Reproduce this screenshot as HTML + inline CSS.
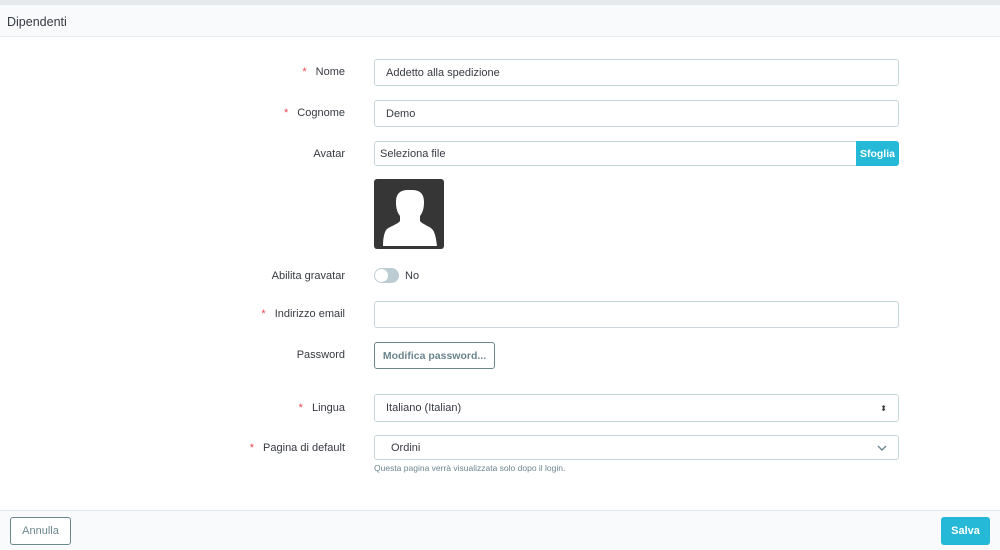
<!DOCTYPE html>
<html><head><meta charset="utf-8"><style>
*{box-sizing:border-box;margin:0;padding:0}
body{width:1000px;height:550px;overflow:hidden;background:#fff;font-family:"Liberation Sans",sans-serif;font-size:11px;color:#363a41;position:relative}
.top{position:absolute;left:0;top:0;width:1000px;height:5px;background:#e6e9ec}
.hdr{position:absolute;left:0;top:5px;width:1000px;height:32px;background:#f8fafb;border-bottom:1px solid #e6ecef;padding:10px 7px;font-size:12.5px;color:#363a41}
.lbl{position:absolute;right:655px;text-align:right;font-size:11px;color:#363a41}
.lbl b{color:#e9484f;font-weight:normal;margin-right:9px}
.inp{position:absolute;left:374px;width:525px;border:1px solid #c7d6da;border-radius:3px;background:#fff;padding:0 11px;display:flex;align-items:center;font-size:11px}
.foot{position:absolute;left:0;top:510px;width:1000px;height:40px;background:#f8fafb;border-top:1px solid #e3eaed}
.btn{position:absolute;border-radius:3px;display:flex;align-items:center;justify-content:center;font-size:11px}
</style></head><body>
<div class="top"></div>
<div class="hdr">Dipendenti</div>

<div class="lbl" style="top:66px"><b>*</b>Nome</div>
<div class="inp" style="top:59px;height:27px">Addetto alla spedizione</div>
<div class="lbl" style="top:107px"><b>*</b>Cognome</div>
<div class="inp" style="top:100px;height:27px">Demo</div>
<div class="lbl" style="top:148px">Avatar</div>
<div class="inp" style="top:141px;height:25px;padding-left:5px">Seleziona file</div>
<div class="btn" style="left:856px;top:141px;width:43px;height:25px;background:#25b9d7;color:#fff;font-weight:bold;border-radius:0 3px 3px 0;font-size:10.5px">Sfoglia</div>
<div style="position:absolute;left:374px;top:179px;width:70px;height:70px;background:#363636;border-radius:3px;overflow:hidden">
<svg width="70" height="70" viewBox="0 0 70 70"><path d="M34 11c-7 0-12 3-12 12 0 6 1 10 4 14v5c-2 3-9 5-13 8-3 3-4 10-4 17h54c-1-8-2-14-5-17-3-3-10-5-12-8v-5c3-4 4-8 4-14 0-9-5-12-12-12z" fill="#fff"/></svg></div>
<div class="lbl" style="top:270px">Abilita gravatar</div>
<div style="position:absolute;left:374px;top:268px;width:25px;height:15px;border-radius:8px;background:#bbcdd2"><div style="position:absolute;left:1px;top:1px;width:13px;height:13px;border-radius:50%;background:#fff"></div></div>
<div style="position:absolute;left:405px;top:270px">No</div>
<div class="lbl" style="top:308px"><b>*</b>Indirizzo email</div>
<div class="inp" style="top:301px;height:27px"></div>
<div class="lbl" style="top:349px">Password</div>
<div class="btn" style="left:374px;top:342px;width:121px;height:27px;border:1px solid #6c868e;color:#6c868e;font-weight:bold;font-size:10.5px">Modifica password...</div>
<div class="lbl" style="top:402px"><b>*</b>Lingua</div>
<div class="inp" style="top:394px;height:28px">Italiano (Italian)<span style="margin-left:auto;font-size:8px">⬍</span></div>
<div class="lbl" style="top:442px"><b>*</b>Pagina di default</div>
<div class="inp" style="top:435px;height:25px;padding-left:16px">Ordini<svg style="margin-left:auto" width="10" height="6" viewBox="0 0 10 6"><path d="M1 1l4 4 4-4" stroke="#6c868e" stroke-width="1.4" fill="none"/></svg></div>
<div style="position:absolute;left:374px;top:463px;font-size:8.5px;color:#6c868e">Questa pagina verrà visualizzata solo dopo il login.</div>

<div class="foot"></div>
<div class="btn" style="left:10px;top:517px;width:61px;height:28px;border:1px solid #6c868e;color:#6c868e;background:#fff">Annulla</div>
<div class="btn" style="left:941px;top:517px;width:49px;height:28px;background:#25b9d7;color:#fff;font-weight:bold">Salva</div>
</body></html>
